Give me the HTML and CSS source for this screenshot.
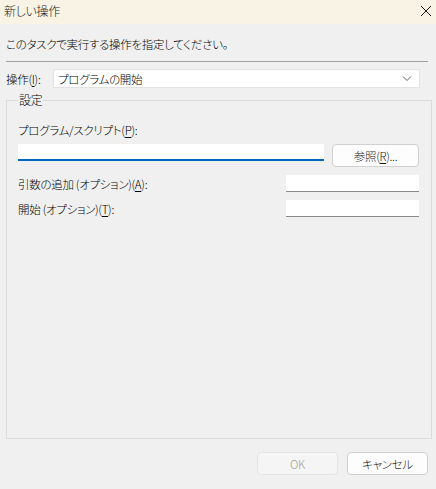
FILE: index.html
```html
<!DOCTYPE html>
<html lang="ja">
<head>
<meta charset="utf-8">
<title>新しい操作</title>
<link rel="stylesheet" href="styles.css">
</head>
<body>
<div class="dialog">
  <div class="titlebar">
    <span class="title">新しい操作</span>
    <svg class="close" width="12" height="12" viewBox="0 0 12 12"><path d="M1 1L11 11M11 1L1 11" stroke="#1a1a1a" stroke-width="1" fill="none"/></svg>
  </div>
  <div class="body">
    <p class="prompt">このタスクで実行する操作を指定してください。</p>
    <div class="rule"></div>
    <div class="action-row">
      <label class="action-label">操作(<u>I</u>):</label>
      <div class="combo">
        <span>プログラムの開始</span>
        <svg class="chevron" width="10" height="6" viewBox="0 0 10 6"><path d="M1 0.5L5 4.5L9 0.5" stroke="#606060" stroke-width="1" fill="none"/></svg>
      </div>
    </div>
    <fieldset class="group">
      <legend>設定</legend>
      <div class="field-label">プログラム/スクリプト(<u>P</u>):</div>
      <div class="program-row">
        <div class="textbox focused"></div>
        <button class="btn browse">参照(<u>R</u>)...</button>
      </div>
      <div class="option-row">
        <span>引数の追加 (オプション)(<u>A</u>):</span>
        <div class="textbox small"></div>
      </div>
      <div class="option-row">
        <span>開始 (オプション)(<u>T</u>):</span>
        <div class="textbox small"></div>
      </div>
    </fieldset>
    <div class="footer">
      <button class="btn dlg disabled">OK</button>
      <button class="btn dlg">キャンセル</button>
    </div>
  </div>
</div>
</body>
</html>
```

FILE: styles.css
```css
html, body {
  margin: 0;
  padding: 0;
}
body {
  width: 436px;
  height: 489px;
  background: #f0f0f0;
  font-family: "Noto Sans CJK JP", "Noto Sans", sans-serif;
  font-size: 11.5px;
  font-weight: 300;
  letter-spacing: -0.3px;
  font-feature-settings: "palt";
  color: #000;
  overflow: hidden;
}
u {
  text-decoration: underline;
  text-underline-offset: 2px;
}
.dialog {
  display: flex;
  flex-direction: column;
  height: 489px;
}
.titlebar {
  height: 24px;
  background: #f9f3e5;
  display: flex;
  align-items: center;
  justify-content: space-between;
  padding: 0 4px 0 4px;
}
.title {
  font-size: 12px;
  color: #1a1a1a;
  line-height: 14px;
  margin-top: -3px;
}
.close {
  margin-top: -2px;
}
.body {
  flex: 1;
  display: flex;
  flex-direction: column;
  padding: 0 4px 0 6px;
}
.prompt {
  margin: 0;
  height: 37px;
  line-height: 14px;
  padding-top: 13px;
  box-sizing: border-box;
}
.rule {
  height: 1px;
  background: #a0a0a0;
  margin-right: 4px;
}
.action-row {
  display: flex;
  align-items: center;
  margin-top: 7px;
  height: 19px;
}
.action-label {
  width: 47px;
  line-height: 14px;
}
.combo {
  flex: 0 0 367px;
  height: 19px;
  box-sizing: border-box;
  background: #fff;
  border: 1px solid #e2e2e2;
  display: flex;
  align-items: center;
  justify-content: space-between;
  padding: 0 7px 0 4px;
  line-height: 14px;
}
.chevron {
  margin-top: 1px;
}
.group {
  margin: 5px 0 0 0;
  padding: 16px 12px 0 11px;
  border: 1px solid #dcdcdc;
  height: 346px;
  box-sizing: border-box;
  min-width: 0;
}
.group legend {
  padding: 0 1px;
  line-height: 14px;
  font-size: 12px;
}
.field-label {
  line-height: 14px;
}
.program-row {
  display: flex;
  align-items: flex-start;
  justify-content: space-between;
  margin-top: 7px;
}
.textbox {
  background: #fff;
  box-sizing: border-box;
  border-bottom: 1px solid #8a8a8a;
}
.textbox.focused {
  width: 306px;
  height: 17px;
  border-bottom: 2px solid #0067c0;
}
.textbox.small {
  width: 133px;
  height: 17px;
}
.btn {
  font-family: inherit;
  font-size: 11.5px;
  font-weight: 300;
  letter-spacing: -0.3px;
  font-feature-settings: "palt";
  color: #1a1a1a;
  background: #fdfdfd;
  border: 1px solid #d0d0d0;
  border-radius: 4px;
  padding: 0;
  margin: 0;
  line-height: 14px;
}
.browse {
  width: 87px;
  height: 23px;
}
.option-row {
  display: flex;
  align-items: center;
  justify-content: space-between;
  height: 17px;
}
.program-row + .option-row,
.option-row + .option-row {
  margin-top: 8px;
}
.footer {
  display: flex;
  justify-content: flex-end;
  gap: 9px;
  margin-top: 13px;
  padding-right: 4px;
}
.dlg {
  width: 81px;
  height: 23px;
}
.dlg.disabled {
  background: #f5f5f5;
  border-color: #e4e4e4;
  color: #a0a0a0;
}
```
